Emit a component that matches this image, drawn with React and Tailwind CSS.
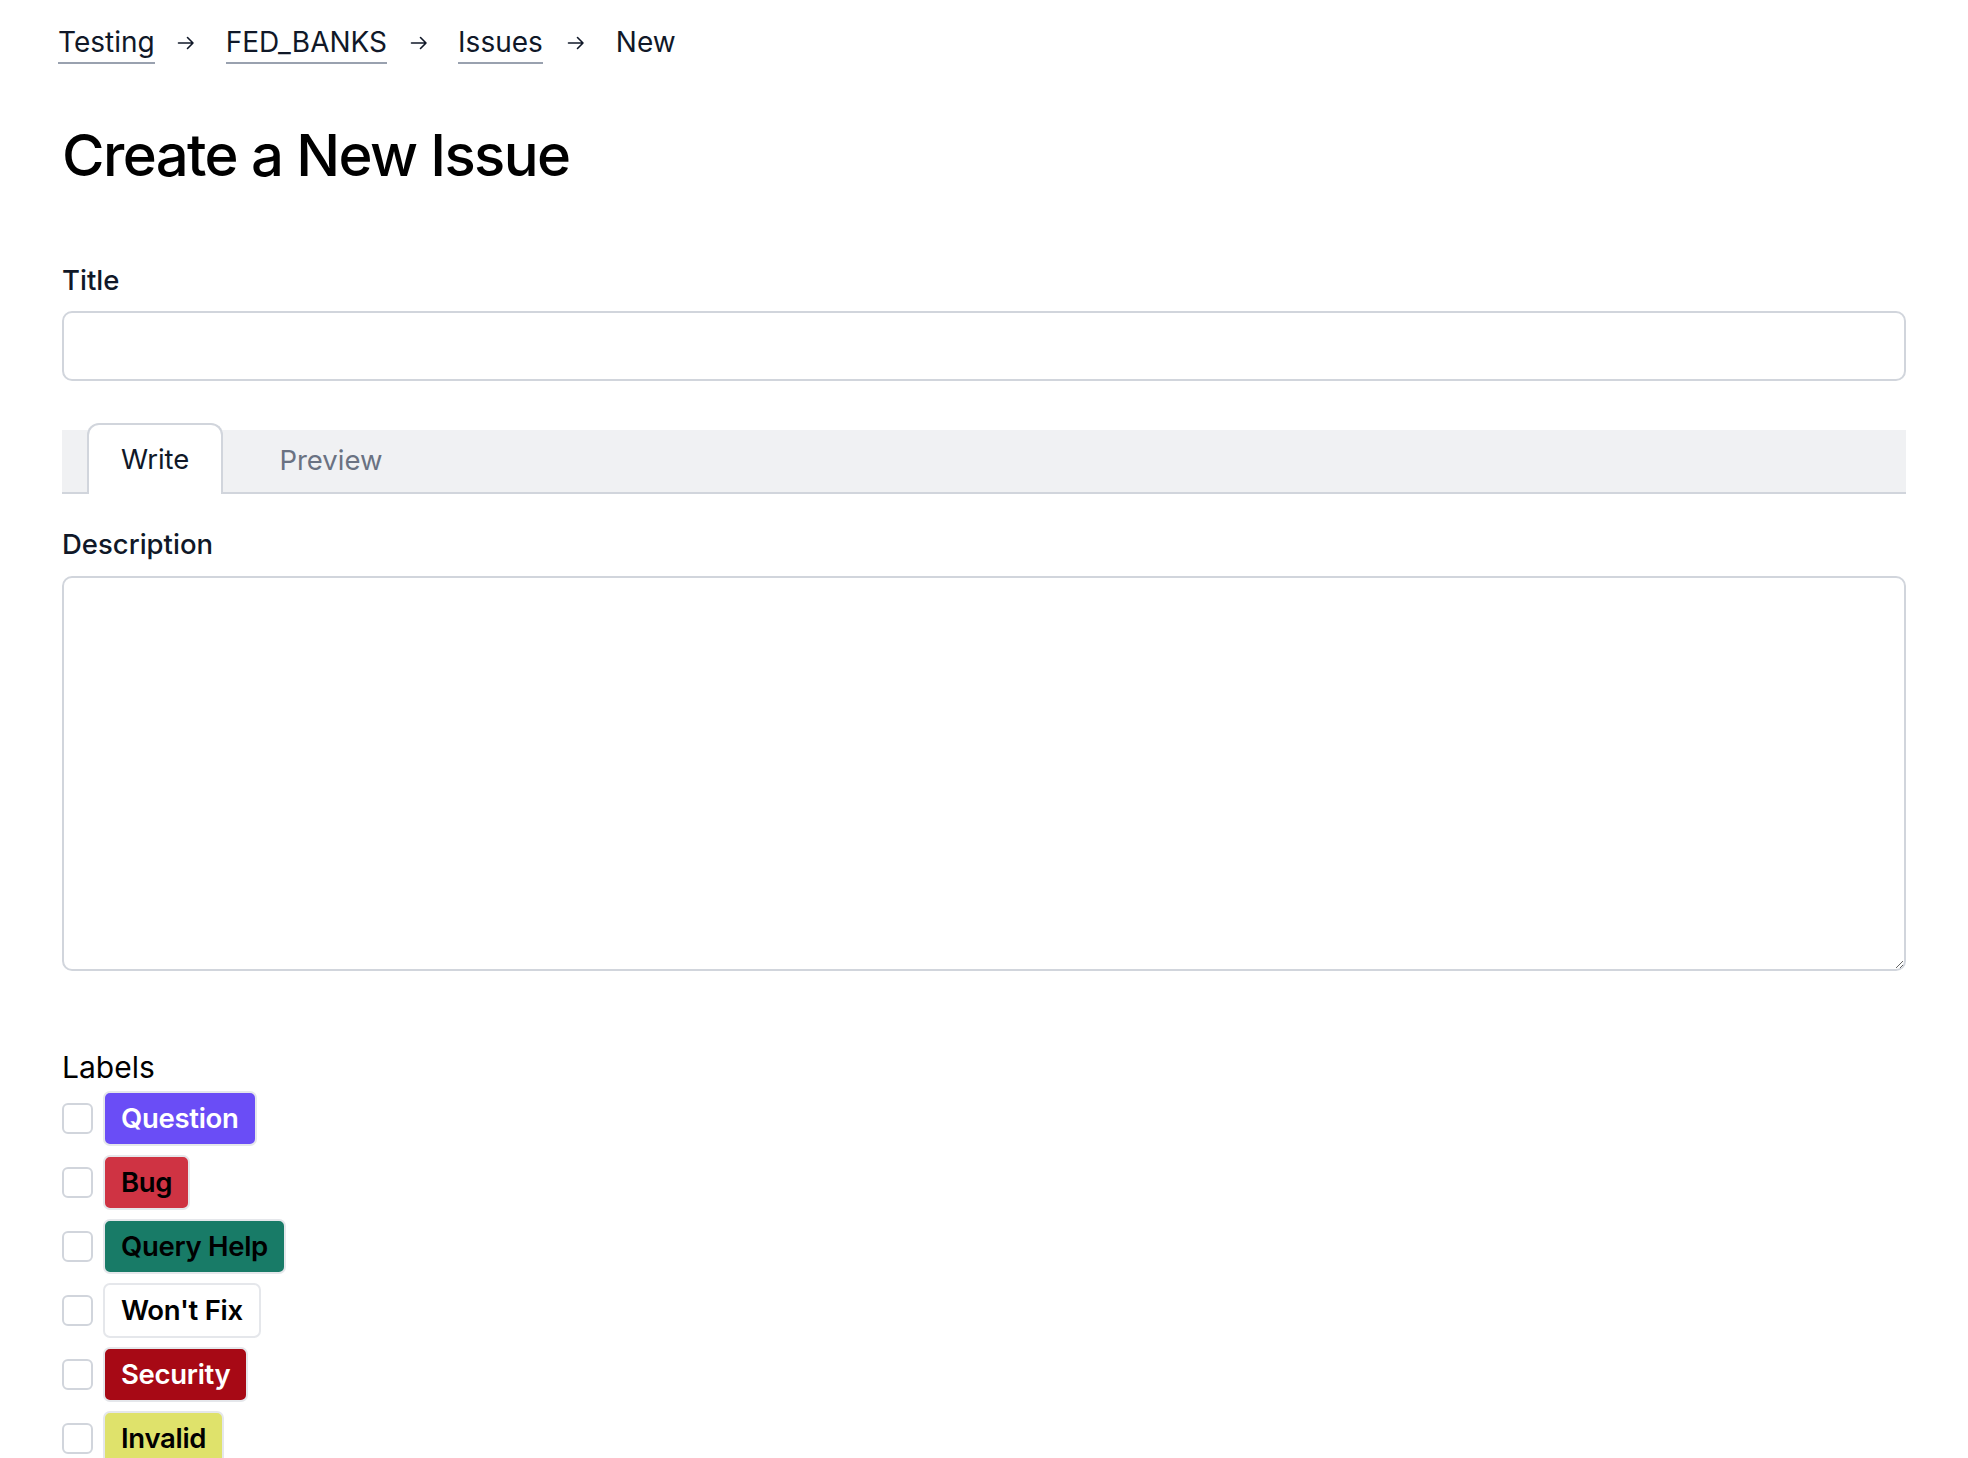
import React from "react";

const LABELS = [
  { name: "Question", bg: "bg-[#6a4df6]", text: "text-white" },
  { name: "Bug", bg: "bg-[#cf3343]", text: "text-black" },
  { name: "Query Help", bg: "bg-[#187b67]", text: "text-black" },
  { name: "Won't Fix", bg: "bg-white", text: "text-black" },
  { name: "Security", bg: "bg-[#a70915]", text: "text-white" },
  { name: "Invalid", bg: "bg-[#dfe26b]", text: "text-black" },
];

function Arrow() {
  return (
    <svg width="20" height="20" viewBox="0 0 20 20" fill="none" className="text-gray-900">
      <path d="M2.5 10h14.5M11.5 4.5 17 10l-5.5 5.5" stroke="currentColor" strokeWidth="1.6" strokeLinecap="round" strokeLinejoin="round" />
    </svg>
  );
}

function Crumb({ children, link }) {
  return (
    <span
      className={
        link
          ? "leading-[40px] border-b-2 border-gray-400 text-gray-900"
          : "leading-[40px] border-b-2 border-transparent text-gray-900"
      }
    >
      {children}
    </span>
  );
}

export default function App() {
  return (
    <div className="min-h-screen bg-white font-['Inter',_'Liberation_Sans',_sans-serif] text-gray-900">
      <div className="px-[62px] pt-[22px] pb-10">

        {/* breadcrumb */}
        <nav className="-ml-[4px] flex items-center text-[28px]">
          <Crumb link>Testing</Crumb>
          <span className="ml-[21px] mr-[30px]"><Arrow /></span>
          <Crumb link>FED_BANKS</Crumb>
          <span className="ml-[22px] mr-[29px]"><Arrow /></span>
          <Crumb link>Issues</Crumb>
          <span className="ml-[23px] mr-[30px]"><Arrow /></span>
          <Crumb>New</Crumb>
        </nav>

        <h1 className="mt-[55px] text-[58px] leading-[72px] font-medium text-black tracking-[-1.6px]">
          Create a New Issue
        </h1>

        {/* title */}
        <label className="mt-[69px] block text-[27.5px] leading-[40px] font-medium text-gray-900">
          Title
        </label>
        <input
          type="text"
          className="mt-[11px] block h-[70px] w-full rounded-[10px] border-2 border-gray-300 bg-white px-4 text-[27.5px] outline-none"
        />

        {/* tabs */}
        <div className="mt-[49px] flex h-[64px] items-end border-b-2 border-gray-300 bg-[#f0f1f3] pl-[25px]">
          <button className="-mb-[2px] h-[71px] rounded-t-[12px] border-2 border-b-0 border-gray-300 bg-white px-[32px] text-[27.5px] text-gray-900">
            Write
          </button>
          <button className="ml-[56px] flex h-[62px] items-center text-[27.5px] text-gray-500">
            Preview
          </button>
        </div>

        {/* description */}
        <label className="mt-[30px] block text-[27.5px] leading-[40px] font-medium text-gray-900">
          Description
        </label>
        <textarea className="mt-[12px] block h-[395px] w-full rounded-[10px] border-2 border-gray-300 bg-white p-4 text-[27.5px] outline-none" />

        {/* labels */}
        <div className="mt-[76px] text-[30px] leading-[40px] text-black">Labels</div>
        <div className="mt-[4px] flex flex-col gap-[9px]">
          {LABELS.map((l) => (
            <div key={l.name} className="flex items-center gap-[10px]">
              <span className="h-[31px] w-[31px] rounded-[6px] border-2 border-gray-300 bg-white" />
              <span
                className={`flex h-[55px] items-center rounded-[7px] border-2 border-gray-200 px-[16px] text-[27.5px] font-semibold tracking-[-0.3px] ${l.bg} ${l.text}`}
              >
                {l.name}
              </span>
            </div>
          ))}
        </div>
      </div>
    </div>
  );
}
